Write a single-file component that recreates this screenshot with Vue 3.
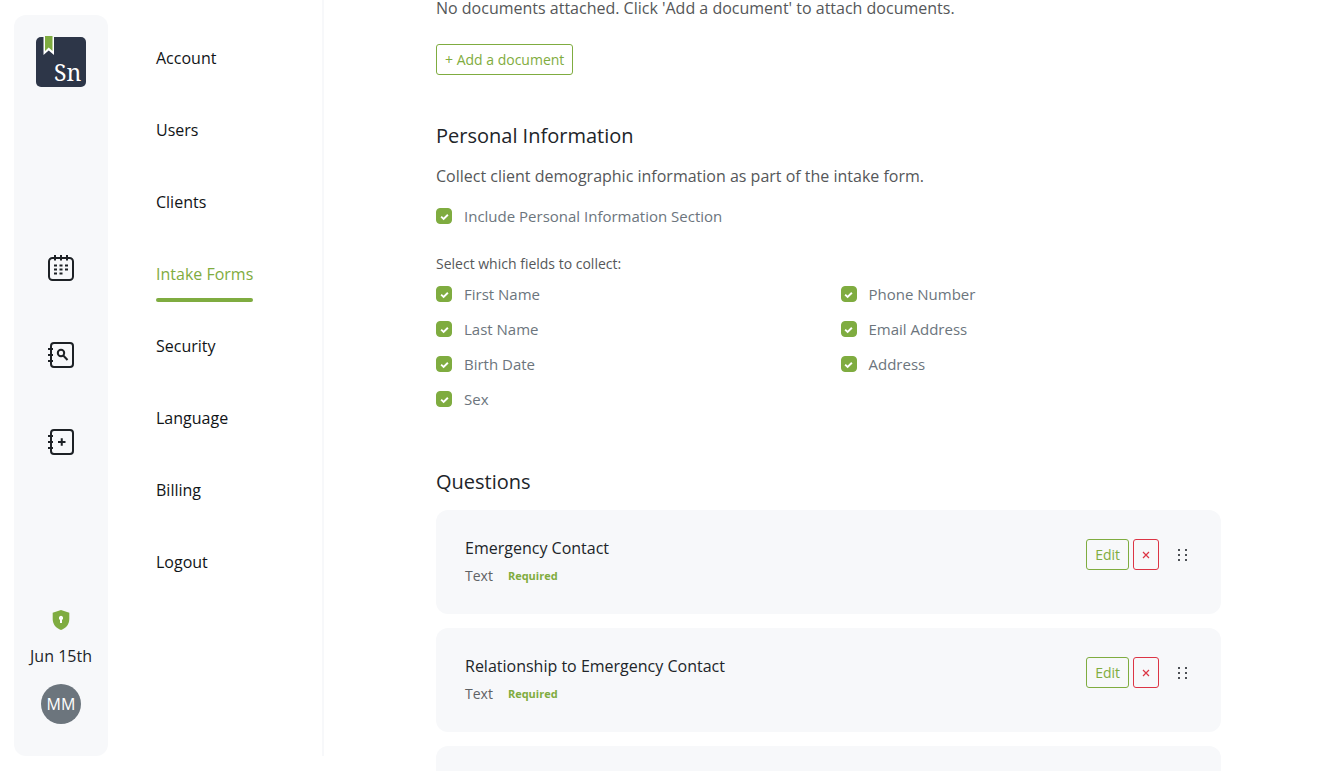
<template>
  <div class="layout">
    <aside class="rail">
      <a href="#" class="logo" aria-label="Sn">
        <svg width="52" height="53" viewBox="0 0 52 53">
          <rect x="1" y="2" width="50" height="50" rx="5" fill="#2d3648" />
          <path d="M8.5 2H19V20L13.700 15.5L8.5 20Z" fill="#fff" />
          <path d="M10 1H17.500V16L13.700 12.6L10 16Z" fill="#7fac40" />
          <text x="19" y="46" class="logo-text">Sn</text>
        </svg>
      </a>

      <nav class="rail-nav">
        <a href="#" aria-label="Calendar">
          <svg class="icon" width="28" height="28" viewBox="0 0 28 28">
            <rect x="2" y="4" width="24" height="22" rx="3.5" />
            <path d="M8 1V6.5M14 1V6.5M20 1V6.5" />
            <path d="M7 11.5H10M12.5 11.5H15.5M18 11.5H21M7 15.5H10M12.5 15.5H15.5M18 15.5H21M7 19.5H10M12.5 19.5H15.5" />
          </svg>
        </a>
        <a href="#" aria-label="Search clients">
          <svg class="icon" width="28" height="28" viewBox="0 0 28 28">
            <rect x="4" y="2" width="22" height="24" rx="3" />
            <path d="M1 8H6M1 14H6M1 20H6" />
            <circle cx="14" cy="12" r="3.2" />
            <path d="M16.5 14.8L20.5 19" />
          </svg>
        </a>
        <a href="#" aria-label="Add client">
          <svg class="icon" width="28" height="28" viewBox="0 0 28 28">
            <rect x="4" y="2" width="22" height="24" rx="3" />
            <path d="M1 8H6M1 14H6M1 20H6" />
            <path d="M11 14H18.5M14.75 10.25V17.75" />
          </svg>
        </a>
      </nav>

      <div class="rail-footer">
        <svg width="18" height="20" viewBox="0 0 18 20">
          <path d="M9 0L17.3 2.8V9C17.3 14.5 13.8 18.2 9 20C4.2 18.2 0.7 14.5 0.7 9V2.8Z" fill="#7fac40" />
          <path d="M9 5.8A2.2 2.2 0 0 1 10 9.9V13H8V9.9A2.2 2.2 0 0 1 9 5.8Z" fill="#fff" />
        </svg>
        <span class="date">Jun 15th</span>
        <button type="button" class="avatar">MM</button>
      </div>
    </aside>

    <nav class="menu">
      <a
        v-for="item in menu"
        :key="item"
        href="#"
        class="menu-item"
        :class="{ active: item === current }"
        @click.prevent="current = item"
      >{{ item }}</a>
    </nav>

    <main class="content">
      <section>
        <p>No documents attached. Click 'Add a document' to attach documents.</p>
        <button type="button" class="btn btn-add">+ Add a document</button>
      </section>

      <section class="personal">
        <h2>Personal Information</h2>
        <p>Collect client demographic information as part of the intake form.</p>
        <label class="check">
          <input v-model="includePersonal" type="checkbox">
          Include Personal Information Section
        </label>
        <p class="hint">Select which fields to collect:</p>
        <div class="fields">
          <div v-for="(column, i) in fields" :key="i" class="column">
            <label v-for="field in column" :key="field.label" class="check">
              <input v-model="field.checked" type="checkbox">
              {{ field.label }}
            </label>
          </div>
        </div>
      </section>

      <section class="questions">
        <h2>Questions</h2>
        <article v-for="question in questions" :key="question.title" class="card">
          <div>
            <h3>{{ question.title }}</h3>
            <div class="meta">
              {{ question.type }}
              <span class="required">Required</span>
            </div>
          </div>
          <div class="actions">
            <button type="button" class="btn">Edit</button>
            <button type="button" class="btn btn-danger" aria-label="Remove">
              <svg width="8" height="8" viewBox="0 0 8 8">
                <path d="M1 1L7 7M7 1L1 7" stroke="currentColor" stroke-width="1.2" />
              </svg>
            </button>
            <svg class="handle" width="12" height="14" viewBox="0 0 12 14">
              <path d="M1 2h2M1 7h2M1 12h2M8 2h2M8 7h2M8 12h2" stroke="#4d5156" stroke-width="2" />
            </svg>
          </div>
        </article>
        <article class="card"></article>
      </section>
    </main>
  </div>
</template>

<script setup>
import { ref } from 'vue'

const menu = ['Account', 'Users', 'Clients', 'Intake Forms', 'Security', 'Language', 'Billing', 'Logout']
const current = ref('Intake Forms')

const includePersonal = ref(true)

const fields = ref([
  [
    { label: 'First Name', checked: true },
    { label: 'Last Name', checked: true },
    { label: 'Birth Date', checked: true },
    { label: 'Sex', checked: true }
  ],
  [
    { label: 'Phone Number', checked: true },
    { label: 'Email Address', checked: true },
    { label: 'Address', checked: true }
  ]
])

const questions = [
  { title: 'Emergency Contact', type: 'Text' },
  { title: 'Relationship to Emergency Contact', type: 'Text' }
]
</script>

<style>
body {
  background: #fff;
}
</style>

<style scoped>
.layout {
  display: flex;
  height: 100vh;
  overflow: hidden;
  font-family: 'Open Sans', sans-serif;
  font-size: 16px;
  line-height: 24px;
  color: #212529;
}

h2, h3, p {
  margin: 0;
  font-weight: 400;
}

a {
  color: inherit;
  text-decoration: none;
}

.rail {
  display: flex;
  flex-direction: column;
  align-items: center;
  justify-content: space-between;
  flex: 0 0 94px;
  box-sizing: border-box;
  margin: 15px 0 15px 14px;
  padding: 20px 0 32px;
  border-radius: 12px;
  background: #f7f8fa;
}

.logo svg,
.rail-nav svg {
  display: block;
}

.logo-text {
  font-family: 'Noto Serif', 'DejaVu Serif', 'Liberation Serif', serif;
  font-size: 23px;
  fill: #fff;
}

.rail-nav {
  display: flex;
  flex-direction: column;
  gap: 59px;
  padding-top: 12px;
}

.icon {
  fill: none;
  stroke: #1d2125;
  stroke-width: 2;
}

.rail-footer {
  display: flex;
  flex-direction: column;
  align-items: center;
}

.date {
  margin: 14px 0 16px;
}

.avatar {
  width: 40px;
  height: 40px;
  padding: 0;
  border: 0;
  border-radius: 50%;
  background: #6c757d;
  color: #fff;
  font: inherit;
}

.menu {
  display: flex;
  flex-direction: column;
  align-items: flex-start;
  gap: 16px;
  flex: 0 0 216px;
  box-sizing: border-box;
  margin-bottom: 15px;
  padding: 30px 0 0 48px;
  border-right: 2px solid #f7f8fa;
}

.menu-item {
  padding: 16px 0 12px;
  border-bottom: 4px solid transparent;
  color: #111417;
}

.menu-item.active {
  position: relative;
  color: #7fac40;
}

.menu-item.active::after {
  content: '';
  position: absolute;
  right: 0;
  bottom: -4px;
  left: 0;
  height: 4px;
  border-radius: 2px;
  background: #7fac40;
}

.content {
  flex: 1;
  min-width: 0;
  margin-top: -4px;
  padding: 0 112px;
}

.content p {
  color: #555759;
}

.btn {
  height: 31px;
  padding: 0 8px;
  border: 1px solid #7fac40;
  border-radius: 3px;
  background: #fff;
  color: #7fac40;
  font: inherit;
  font-size: 14px;
  line-height: 20px;
}

.card .btn {
  background: transparent;
}

.btn-add {
  display: block;
  margin-top: 24px;
}

.card .btn-danger {
  width: 26px;
  border-color: #dc3545;
  color: #dc3545;
}

.btn-danger svg {
  display: block;
}

.personal {
  margin-top: 49px;
}

h2 {
  font-size: 20px;
}

.personal h2 {
  margin-bottom: 16px;
}

.check {
  display: flex;
  align-items: center;
  gap: 12px;
  font-size: 15px;
  color: #6c757d;
}

.check input {
  appearance: none;
  width: 16px;
  height: 16px;
  margin: 0;
  border: 1px solid #7fac40;
  border-radius: 4px;
  background: #fff;
}

.check input:checked {
  background: #7fac40 url("data:image/svg+xml,%3Csvg xmlns='http://www.w3.org/2000/svg' viewBox='0 0 8 8'%3E%3Cpath d='M1 4.1L3.2 6.1L7 2.4' fill='none' stroke='white' stroke-width='1.7'/%3E%3C/svg%3E") center / 9px 9px no-repeat;
}

.personal > .check {
  margin-top: 16px;
}

.content .hint {
  margin: 24px 0 6px;
  font-size: 14px;
}

.fields {
  display: grid;
  grid-template-columns: 1fr 1fr;
  gap: 24px;
}

.column {
  display: flex;
  flex-direction: column;
  gap: 11px;
}

.questions {
  display: flex;
  flex-direction: column;
  gap: 14px;
  margin-top: 59px;
}

.questions h2 {
  margin-bottom: 2px;
}

.card {
  display: flex;
  justify-content: space-between;
  align-items: flex-start;
  box-sizing: border-box;
  min-height: 104px;
  padding: 26px 32px 26px 29px;
  border-radius: 12px;
  background: #f7f8fa;
}

h3 {
  font-size: 16px;
}

.meta {
  display: flex;
  align-items: center;
  gap: 15px;
  margin-top: 4px;
  font-size: 14px;
  color: #5f6265;
}

.required {
  font-size: 11px;
  font-weight: 700;
  color: #7fac40;
}

.actions {
  display: flex;
  align-items: center;
  gap: 4px;
  margin-top: 3px;
}

.handle {
  margin-left: 14px;
}
</style>
